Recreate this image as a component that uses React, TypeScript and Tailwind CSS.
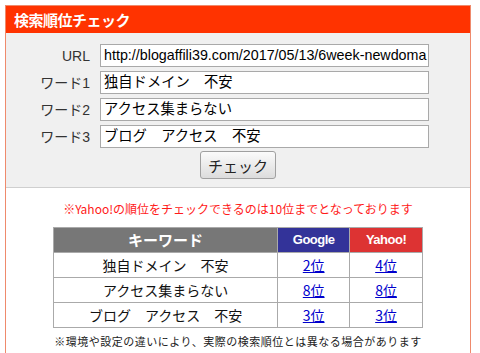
import React from "react";

const jp = { fontFamily: '"Noto Sans CJK JP", "Noto Sans", sans-serif' };
const ar = { fontFamily: '"Liberation Sans", "Noto Sans CJK JP", sans-serif' };

const rows = [
  { kw: "独自ドメイン　不安", g: "2位", y: "4位" },
  { kw: "アクセス集まらない", g: "8位", y: "8位" },
  { kw: "ブログ　アクセス　不安", g: "3位", y: "3位" },
];

export default function App() {
  const fields = [
    { label: "URL", value: "http://blogaffili39.com/2017/05/13/6week-newdoma" },
    { label: "ワード1", value: "独自ドメイン　不安" },
    { label: "ワード2", value: "アクセス集まらない" },
    { label: "ワード3", value: "ブログ　アクセス　不安" },
  ];
  return (
    <div className="w-[480px] h-[353px] bg-white overflow-hidden" style={jp}>
      <div className="ml-[5px] mt-[5px] w-[466px] h-[360px] border border-[#ef8a6c] flex flex-col">
        <div className="h-[27px] bg-[#ff3300] flex items-center pl-[8px]">
          <span className="text-white font-bold text-[15px] leading-none tracking-[-0.5px]">検索順位チェック</span>
        </div>
        <div className="bg-[#f0f0f0] border-b border-[#cfcfcf] pt-[11px] pb-[8px] flex flex-col">
          <div className="flex flex-col gap-[4px]">
            {fields.map((f) => (
              <div key={f.label} className="flex items-center h-[23px]">
                <div className="w-[84px] text-right text-[14px] text-[#333] leading-none" style={ar}>
                  {f.label}
                </div>
                <div className="ml-[10px] w-[329px] h-[23px] bg-white border border-[#a9a9a9] flex items-center px-[3px] overflow-hidden whitespace-nowrap">
                  <span className="text-[14.3px] text-black leading-none" style={ar}>{f.value}</span>
                </div>
              </div>
            ))}
          </div>
          <div className="flex justify-center mt-[3px]">
            <button
              className="w-[76px] h-[28px] rounded-[3px] border border-[#a0a0a0] bg-gradient-to-b from-[#fbfbfb] to-[#dcdcdc] text-[15px] text-[#222] leading-none"
              style={jp}
            >
              チェック
            </button>
          </div>
        </div>
        <div className="flex flex-col items-center">
          <div className="mt-[15px] text-[12px] text-[#ff1a1a] leading-none" style={jp}>
            ※Yahoo!の順位をチェックできるのは10位までとなっております
          </div>
          <table className="mt-[12px] w-[370px] border-collapse border border-[#aaaaaa]">
            <thead>
              <tr className="h-[25px]">
                <th className="w-[225px] bg-[#777777] text-white text-[15px] font-bold border border-[#aaaaaa]">キーワード</th>
                <th className="w-[72px] bg-[#333399] text-white text-[13px] font-bold border border-[#aaaaaa] tracking-[-0.5px]" style={ar}>Google</th>
                <th className="w-[73px] bg-[#dd3333] text-white text-[13px] font-bold border border-[#aaaaaa] tracking-[-0.5px]" style={ar}>Yahoo!</th>
              </tr>
            </thead>
            <tbody>
              {rows.map((r) => (
                <tr key={r.kw} className="h-[25px]">
                  <td className="text-center text-[14px] text-[#111] border border-[#aaaaaa] leading-none">{r.kw}</td>
                  <td className="text-center text-[14px] border border-[#aaaaaa] leading-none">
                    <a className="text-[#0000cc] underline">{r.g}</a>
                  </td>
                  <td className="text-center text-[14px] border border-[#aaaaaa] leading-none">
                    <a className="text-[#0000cc] underline">{r.y}</a>
                  </td>
                </tr>
              ))}
            </tbody>
          </table>
          <div className="mt-[8px] text-[11px] text-[#222] leading-none tracking-[0.5px]">
            ※環境や設定の違いにより、実際の検索順位とは異なる場合があります
          </div>
        </div>
      </div>
    </div>
  );
}
